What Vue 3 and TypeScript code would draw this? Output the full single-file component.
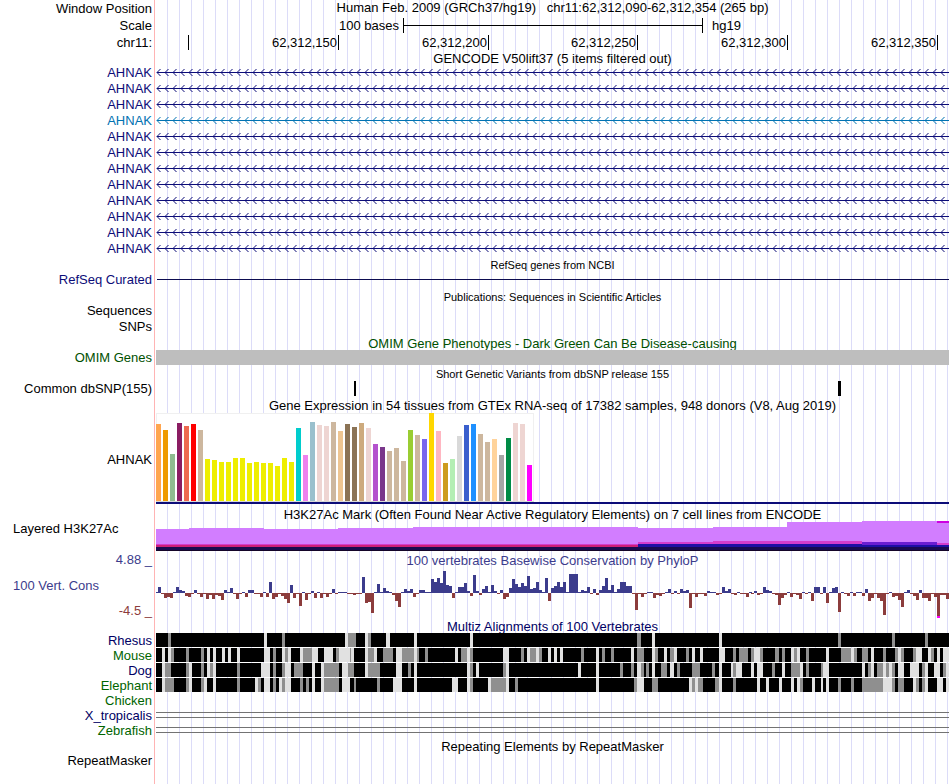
<script setup lang="ts">
type Span = [start: number, width: number, shade: 'g' | 'l']

interface SpanBlock {
  offset: number
  spans: Span[]
}

interface Layer {
  color: string
  points: [x: number, y: number, width: number, height: number][]
}

const ORIGIN = 156

const genes = Array.from({ length: 12 }, (_, i) => ({ id: i, name: 'AHNAK', alt: i === 3 }))

const arrowHeads = Array.from({ length: 99 }, (_, i) => `M${4.5 + i * 8} 5l-3.5 3.5l3.5 3.5`).join('')

const ticks = ['', '62,312,150', '62,312,200', '62,312,250', '62,312,300', '62,312,350']

const tan = '#cdb79e'
const yellow = '#eeee00'
const rose = '#eed5d2'
const tissues: [height: number, color: string][] = [
  [77, '#ffa54f'], [71, '#ee9a00'], [47, '#8fbc8f'], [78, '#8b1c62'], [75, '#ee6a50'], [77, '#ff0000'],
  [71, tan], [42, yellow], [41, yellow], [39, yellow], [39, yellow], [43, yellow], [43, yellow],
  [38, yellow], [39, yellow], [38, yellow], [38, yellow], [35, yellow], [43, yellow], [39, yellow],
  [73, '#00cdcd'], [46, '#ee82ee'], [79, '#9ac0cd'], [76, rose], [75, rose], [79, tan],
  [70, '#eec591'], [77, '#8b7355'], [74, '#8b7355'], [78, '#cdaa7d'], [73, rose], [57, '#b452cd'],
  [54, '#7a378b'], [50, tan], [53, tan], [40, tan], [71, '#9acd32'], [66, tan],
  [62, '#7a67ee'], [88, '#ffd700'], [70, '#ffb6c1'], [38, '#cd9b1d'], [42, '#b4eeb4'], [65, '#d9d9d9'],
  [76, '#3a5fcd'], [77, '#1e90ff'], [67, tan], [59, tan], [62, '#ffd39b'], [46, '#a6a6a6'],
  [63, '#008b45'], [78, rose], [77, rose], [36, '#ff00ff'],
]

const layers: Layer[] = [
  {
    color: '#d27dff',
    points: [
      [0, 8, 33, 22], [33, 7, 75, 23], [108, 8, 74, 22], [182, 7, 75, 23], [257, 6, 225, 24],
      [482, 7, 75, 23], [557, 6, 74, 24], [631, 1, 75, 29], [706, 0, 87, 30],
    ],
  },
  { color: '#d43ccd', points: [[0, 23, 482, 7], [482, 21, 75, 9], [557, 20, 149, 10], [781, 22, 12, 8]] },
  { color: '#cd1e78', points: [[0, 24, 482, 6]] },
  { color: '#6a1ed2', points: [[706, 21, 75, 9]] },
  { color: '#1e0fa5', points: [[482, 23, 224, 7], [706, 24, 87, 6]] },
  { color: '#190a50', points: [[0, 26, 793, 4]] },
  { color: '#140528', points: [[0, 29, 793, 1]] },
  { color: '#cd00e1', points: [[781, 0, 12, 2]] },
]

const conservation: { offset: number; values: number[] }[] = [
  {
    offset: -1,
    values: [
      1, 6, -1, -5, -4, -5, 1, 6, 3, 2, -3, -4, -1, 3, -1, -4, -1, -6, -2, -6, -2, -3, -7, 3, 1, 5, -1, -6, -1, 1,
      -4, 3, 3, -1, -1, -4, 1, -4, 11, -6, -4, -1, -3, -6, -10, 8, -5, -1, -13, 1, -7, -1, 2, -5, 1, -5, -1, -4,
      -1, 4, -1, 1, 1, 1, -1,
    ],
  },
  {
    offset: 194,
    values: [
      -1, -2, -1, -1, 16, -10, -9, -20, 1, 9, 1, 5, 2, 1, -2, -8, -14, 1, 4, 2, 4, -4, -1, 3, 3, 1, 1, 14, 11, 15,
      10, 22, 8, 7, -5, 1, 6, 6, 10, 2, -3, 18, 2, -2, 4, 7, 1, 8, 2, -1, 3, -6, -4, 5, 14, 9, 6, 10, 7, 17, 4, 5,
      11, 3, 1, 15, -8,
    ],
  },
  {
    offset: 395,
    values: [
      5, 7, 11, 6, 11, 1, 19, 19, 19, 1, 3, 2, 6, -1, 4, -2, 3, 7, 15, 3, 8, 1, 4, 11, 11, 7, 7, -1, -17, -1, -4,
      -1, 1, 1, -5, -2, -3, -1, 1, 4, -1, 2, -1, 4, 2, 3, -15, -1, -4, -1, -1, -3, 2, 1, 1, -2, -1, 6, 2, 4, -1,
      -2, 1, -1, -1, -4, 1,
    ],
  },
  {
    offset: 595,
    values: [
      -1, 2, -2, -1, 6, 3, 2, -1, -2, -12, -5, -2, 1, -4, -1, -2, -6, 1, -1, 1, -8, 6, 6, -1, 6, -10, 1, 5, 6, -19,
      1, -1, -3, 1, -3, 1, 1, -3, 4, -8, -5, -1, -5, -8, -22, -1, 1, -4, -3, -7, -14, 1, 3, -1, -3, -7, 3, -5, -5,
      -8, -1, -4, -23, -2, -2, -6,
    ],
  },
]

const conservationBars = conservation.flatMap(({ offset, values }) =>
  values.map((v, i) => ({ x: offset + i * 3, y: v > 0 ? 25 - v : 25, h: Math.abs(v), up: v > 0 })),
)

const species: { name: string; alt: boolean; blocks: SpanBlock[] }[] = [
  {
    name: 'Rhesus',
    alt: false,
    blocks: [
      { offset: 150, spans: [[18, 3, 'g'], [114, 3, 'l'], [132, 3, 'g'], [195, 3, 'l'], [198, 8, 'g']] },
      { offset: 350, spans: [[15, 3, 'l'], [18, 3, 'g'], [36, 4, 'l'], [64, 3, 'l'], [120, 3, 'l']] },
      { offset: 550, spans: [[87, 4, 'g'], [102, 3, 'l'], [169, 3, 'l']] },
      { offset: 750, spans: [[88, 3, 'g'], [142, 3, 'g'], [175, 3, 'g']] },
    ],
  },
  {
    name: 'Mouse',
    alt: true,
    blocks: [
      {
        offset: 150,
        spans: [
          [12, 3, 'l'], [18, 3, 'l'], [21, 3, 'g'], [36, 3, 'g'], [51, 3, 'g'], [57, 3, 'l'], [63, 3, 'l'],
          [72, 3, 'l'], [78, 3, 'l'], [87, 3, 'l'], [114, 6, 'l'], [123, 3, 'g'], [132, 3, 'l'], [135, 3, 'g'],
          [138, 3, 'l'], [150, 3, 'l'], [153, 9, 'g'], [162, 6, 'l'], [174, 9, 'l'], [186, 3, 'g'], [189, 11, 'l'],
        ],
      },
      {
        offset: 350,
        spans: [
          [0, 1, 'g'], [1, 3, 'l'], [15, 3, 'l'], [18, 6, 'g'], [24, 3, 'l'], [33, 10, 'g'], [46, 6, 'l'],
          [52, 12, 'g'], [64, 3, 'l'], [67, 2, 'g'], [75, 3, 'g'], [105, 3, 'l'], [111, 6, 'g'], [117, 3, 'l'],
          [120, 3, 'g'], [153, 6, 'l'], [171, 3, 'g'], [177, 3, 'l'], [180, 6, 'g'], [186, 3, 'l'], [189, 3, 'g'],
          [198, 3, 'l'],
        ],
      },
      {
        offset: 550,
        spans: [
          [4, 3, 'l'], [10, 3, 'l'], [31, 3, 'g'], [46, 3, 'l'], [52, 3, 'g'], [61, 3, 'g'], [81, 3, 'l'],
          [87, 7, 'g'], [102, 3, 'l'], [105, 3, 'g'], [114, 3, 'l'], [120, 4, 'g'], [124, 3, 'l'], [136, 3, 'g'],
          [142, 3, 'l'], [150, 3, 'l'], [169, 6, 'l'], [183, 3, 'g'], [189, 9, 'g'],
        ],
      },
      {
        offset: 750,
        spans: [
          [1, 3, 'g'], [4, 6, 'l'], [10, 3, 'g'], [25, 4, 'g'], [32, 3, 'g'], [41, 3, 'l'], [44, 3, 'g'],
          [47, 3, 'l'], [56, 3, 'g'], [76, 3, 'l'], [91, 10, 'g'], [101, 3, 'l'], [104, 3, 'g'], [112, 6, 'g'],
          [121, 3, 'l'], [133, 3, 'g'], [145, 3, 'g'], [148, 3, 'l'], [151, 3, 'g'], [163, 3, 'g'], [166, 6, 'l'],
          [178, 3, 'l'], [181, 3, 'g'], [187, 3, 'l'], [193, 6, 'l'],
        ],
      },
    ],
  },
  {
    name: 'Dog',
    alt: false,
    blocks: [
      {
        offset: 150,
        spans: [
          [12, 3, 'l'], [15, 6, 'g'], [36, 3, 'g'], [39, 3, 'l'], [51, 3, 'g'], [57, 3, 'l'], [60, 3, 'g'],
          [63, 3, 'l'], [87, 3, 'g'], [111, 9, 'l'], [123, 3, 'g'], [132, 3, 'g'], [135, 6, 'l'], [144, 9, 'g'],
          [162, 3, 'l'], [171, 3, 'l'], [174, 15, 'g'], [192, 6, 'l'], [198, 2, 'g'],
        ],
      },
      {
        offset: 350,
        spans: [
          [0, 4, 'g'], [15, 3, 'l'], [18, 12, 'g'], [46, 6, 'l'], [58, 3, 'g'], [64, 3, 'l'], [117, 3, 'l'],
          [120, 3, 'g'], [126, 3, 'l'], [153, 3, 'g'], [156, 3, 'l'],
        ],
      },
      {
        offset: 550,
        spans: [
          [28, 3, 'l'], [46, 3, 'l'], [70, 3, 'g'], [81, 3, 'g'], [87, 4, 'l'], [91, 3, 'g'], [96, 3, 'g'],
          [102, 3, 'l'], [111, 6, 'g'], [120, 4, 'l'], [127, 3, 'g'], [142, 8, 'g'], [162, 3, 'g'], [169, 3, 'l'],
          [181, 2, 'l'], [183, 3, 'g'], [186, 6, 'l'],
        ],
      },
      {
        offset: 750,
        spans: [
          [1, 3, 'l'], [7, 6, 'l'], [22, 3, 'g'], [32, 3, 'l'], [41, 9, 'g'], [50, 3, 'l'], [56, 3, 'g'],
          [71, 2, 'g'], [73, 6, 'l'], [112, 3, 'l'], [118, 3, 'g'], [121, 3, 'l'], [127, 6, 'g'], [133, 3, 'l'],
          [136, 3, 'g'], [139, 3, 'l'], [142, 3, 'g'], [148, 6, 'l'], [160, 9, 'l'], [172, 3, 'g'], [175, 3, 'l'],
          [184, 6, 'l'], [193, 3, 'g'], [196, 3, 'l'],
        ],
      },
    ],
  },
  {
    name: 'Elephant',
    alt: true,
    blocks: [
      {
        offset: 150,
        spans: [
          [12, 3, 'l'], [15, 9, 'g'], [36, 3, 'g'], [39, 3, 'l'], [51, 3, 'g'], [54, 3, 'l'], [63, 3, 'l'],
          [87, 3, 'g'], [105, 3, 'l'], [108, 3, 'g'], [114, 6, 'l'], [123, 3, 'g'], [129, 3, 'l'], [132, 3, 'g'],
          [135, 6, 'l'], [150, 3, 'g'], [156, 3, 'g'], [162, 3, 'l'], [171, 3, 'l'], [174, 15, 'g'], [192, 8, 'l'],
        ],
      },
      {
        offset: 350,
        spans: [
          [4, 2, 'g'], [27, 3, 'g'], [43, 9, 'l'], [64, 3, 'l'], [102, 6, 'l'], [117, 3, 'l'], [120, 3, 'g'],
          [138, 3, 'l'], [141, 15, 'g'], [156, 3, 'l'], [165, 3, 'g'],
        ],
      },
      {
        offset: 550,
        spans: [
          [46, 3, 'l'], [84, 3, 'g'], [87, 7, 'l'], [102, 6, 'g'], [139, 3, 'l'], [142, 3, 'g'], [145, 3, 'l'],
          [148, 5, 'g'], [165, 4, 'g'], [169, 3, 'l'], [183, 3, 'g'],
        ],
      },
      {
        offset: 750,
        spans: [
          [7, 3, 'l'], [16, 3, 'l'], [29, 3, 'l'], [41, 3, 'l'], [47, 3, 'l'], [50, 3, 'g'], [62, 3, 'l'],
          [71, 2, 'l'], [76, 3, 'l'], [88, 3, 'g'], [101, 3, 'g'], [112, 21, 'g'], [133, 9, 'l'], [142, 3, 'g'],
          [148, 6, 'g'], [163, 3, 'l'], [166, 3, 'g'], [172, 3, 'g'], [175, 3, 'l'], [187, 6, 'l'], [196, 3, 'l'],
        ],
      },
    ],
  },
]

const alignments = species.map((s) => ({
  name: s.name,
  alt: s.alt,
  cells: s.blocks.flatMap((b) =>
    b.spans.map(([start, width, shade]) => ({ x: b.offset - ORIGIN + start, width, shade })),
  ),
}))

const distant = [
  { name: 'Chicken', alt: true, lines: false },
  { name: 'X_tropicalis', alt: false, lines: true },
  { name: 'Zebrafish', alt: true, lines: true },
]
</script>

<template>
  <main class="browser">
    <div class="row header">
      <div class="label">Window Position</div>
      <div class="data title"><span class="position">Human Feb. 2009 (GRCh37/hg19)&nbsp;&nbsp; chr11:62,312,090-62,312,354 (265 bp)</span></div>
    </div>
    <div class="row scale-row">
      <div class="label">Scale</div>
      <div class="data scale">
        <span class="scale-from">100 bases</span>
        <span class="scale-bar"></span>
        <span class="scale-to">hg19</span>
      </div>
    </div>
    <div class="row ruler-row">
      <div class="label">chr11:</div>
      <div class="data ruler">
        <span v-for="(t, i) in ticks" :key="i" class="tick">{{ t }}</span>
      </div>
    </div>

    <div class="row first-title">
      <div class="label"></div>
      <div class="data title">GENCODE V50lift37 (5 items filtered out)</div>
    </div>
    <div v-for="g in genes" :key="g.id" class="row gene" :class="{ alt: g.alt }">
      <div class="label">{{ g.name }}</div>
      <svg class="data plot" viewBox="0 0 793 16" preserveAspectRatio="none">
        <rect x="1" y="8" width="792" height="1" fill="currentColor" shape-rendering="crispEdges" />
        <path :d="arrowHeads" fill="none" stroke="currentColor" />
      </svg>
    </div>

    <div class="row title-row">
      <div class="label"></div>
      <div class="data title small">RefSeq genes from NCBI</div>
    </div>
    <div class="row refseq">
      <div class="label">RefSeq Curated</div>
      <svg class="data plot" viewBox="0 0 793 17" preserveAspectRatio="none" shape-rendering="crispEdges">
        <rect x="1" y="8" width="792" height="1" fill="#0c0c50" />
      </svg>
    </div>

    <div class="row title-row">
      <div class="label"></div>
      <div class="data title small">Publications: Sequences in Scientific Articles</div>
    </div>
    <div class="row publication"><div class="label">Sequences</div></div>
    <div class="row publication"><div class="label">SNPs</div></div>

    <div class="row title-row omim">
      <div class="label"></div>
      <div class="data title">OMIM Gene Phenotypes - Dark Green Can Be Disease-causing</div>
    </div>
    <div class="row title-row omim">
      <div class="label">OMIM Genes</div>
      <div class="data omim-bar"></div>
    </div>

    <div class="row title-row">
      <div class="label"></div>
      <div class="data title small">Short Genetic Variants from dbSNP release 155</div>
    </div>
    <div class="row snp">
      <div class="label">Common dbSNP(155)</div>
      <svg class="data plot" viewBox="0 0 793 17" preserveAspectRatio="none" shape-rendering="crispEdges">
        <rect x="198" y="1" width="2" height="15" />
        <rect x="682" y="1" width="3" height="15" />
      </svg>
    </div>

    <div class="row title-row">
      <div class="label"></div>
      <div class="data title">Gene Expression in 54 tissues from GTEx RNA-seq of 17382 samples, 948 donors (V8, Aug 2019)</div>
    </div>
    <div class="row gtex">
      <div class="label">AHNAK</div>
      <svg class="data plot" viewBox="0 0 793 94" preserveAspectRatio="none" shape-rendering="crispEdges">
        <rect x="0" y="1" width="378" height="89" fill="#f0f0f0" />
        <rect x="1" y="2" width="376" height="87" fill="#fff" />
        <rect x="0" y="89" width="378" height="1" fill="#d8d8d8" />
        <rect
          v-for="([h, color], i) in tissues"
          :key="i"
          :x="i * 7"
          :y="89 - h"
          width="5"
          :height="h"
          :fill="color"
        />
        <rect x="0" y="90" width="793" height="2" fill="#0c0c78" />
      </svg>
    </div>

    <div class="row title-row">
      <div class="label"></div>
      <div class="data title">H3K27Ac Mark (Often Found Near Active Regulatory Elements) on 7 cell lines from ENCODE</div>
    </div>
    <div class="row h3k">
      <div class="label wide">Layered H3K27Ac</div>
      <svg class="data plot" viewBox="0 0 793 30" preserveAspectRatio="none" shape-rendering="crispEdges">
        <g v-for="(layer, i) in layers" :key="i" :fill="layer.color">
          <rect v-for="([x, y, w, h], j) in layer.points" :key="j" :x="x" :y="y" :width="w" :height="h" />
        </g>
      </svg>
    </div>

    <div class="row cons">
      <div class="label stack">
        <span>4.88 _</span>
        <span class="wide">100 Vert. Cons</span>
        <span class="low">-4.5 _</span>
      </div>
      <div class="data">
        <div class="title cons-title">100 vertebrates Basewise Conservation by PhyloP</div>
        <svg class="plot cons-plot" viewBox="0 0 793 50" preserveAspectRatio="none" shape-rendering="crispEdges">
          <rect
            v-for="(b, i) in conservationBars"
            :key="i"
            :x="b.x"
            :y="b.y"
            width="3"
            :height="b.h"
            :fill="b.up ? '#3c3c8c' : '#8c3c3c'"
          />
          <rect x="781" y="48" width="3" height="2" fill="#ff00ff" />
        </svg>
      </div>
    </div>

    <div class="row title-row multiz">
      <div class="label"></div>
      <div class="data title">Multiz Alignments of 100 Vertebrates</div>
    </div>
    <div v-for="s in alignments" :key="s.name" class="row title-row multiz" :class="{ even: s.alt }">
      <div class="label">{{ s.name }}</div>
      <svg class="data plot" viewBox="0 0 793 15" preserveAspectRatio="none" shape-rendering="crispEdges">
        <rect width="793" height="14" fill="#000" />
        <rect
          v-for="(c, i) in s.cells"
          :key="i"
          :x="c.x"
          y="0"
          :width="c.width"
          height="14"
          :fill="c.shade === 'g' ? '#8f8f8f' : '#e1e1e1'"
        />
      </svg>
    </div>
    <div v-for="s in distant" :key="s.name" class="row title-row multiz" :class="{ even: s.alt }">
      <div class="label">{{ s.name }}</div>
      <svg
        v-if="s.lines"
        class="data plot"
        viewBox="0 0 793 15"
        preserveAspectRatio="none"
        shape-rendering="crispEdges"
      >
        <rect y="4" width="793" height="1" fill="#737373" />
        <rect y="9" width="793" height="1" fill="#737373" />
      </svg>
    </div>

    <div class="row title-row">
      <div class="label"></div>
      <div class="data title">Repeating Elements by RepeatMasker</div>
    </div>
    <div class="row title-row"><div class="label">RepeatMasker</div></div>
    <div class="row rest"><div class="label"></div></div>
  </main>
</template>

<style>
body {
  margin: 0;
  background: #fff;
}
</style>

<style scoped>
.browser {
  display: flex;
  flex-direction: column;
  box-sizing: border-box;
  min-height: 100vh;
  padding-right: 1px;
  overflow: hidden;
  color: #000;
  font: 13px/15px "Liberation Sans", Arial, sans-serif;
  white-space: nowrap;
  background: repeating-linear-gradient(to right, transparent 0 11px, #dcdcf8 11px 12px) 156px 0 / calc(100% - 157px) 100% no-repeat;
}

.row {
  display: grid;
  grid-template-columns: 155px minmax(0, 1fr);
  column-gap: 1px;
}

.label {
  display: flex;
  align-items: center;
  justify-content: flex-end;
  box-sizing: border-box;
  min-height: 0;
  padding-right: 2px;
  border-right: 1px solid #ffb4b4;
}

.label.wide {
  justify-content: flex-start;
  padding-left: 13px;
  padding-bottom: 16px;
}

.title {
  display: flex;
  align-items: center;
  justify-content: center;
}

.title-row .title {
  box-sizing: border-box;
  height: 15px;
  padding-top: 2px;
}

.title-row .small {
  padding-top: 4px;
  font-size: 11px;
}

.plot {
  display: block;
  width: 100%;
  height: 100%;
  min-height: 0;
}

.header { height: 16px; }
.scale-row { height: 18px; }
.ruler-row { height: 17px; }
.first-title { height: 13px; }
.gene, .publication { height: 16px; }
.title-row { height: 15px; }
.refseq, .snp { height: 17px; }
.gtex { height: 94px; }
.h3k { height: 30px; }
.cons { height: 67px; }
.rest { flex: 1; }

.header .title,
.publication .label {
  padding-bottom: 2px;
}

.scale {
  display: grid;
  grid-template-columns: 247fr 300fr 246fr;
  align-items: center;
}

.scale-from {
  padding-right: 4px;
  text-align: right;
}

.scale-bar {
  height: 15px;
  box-sizing: border-box;
  border: solid #000;
  border-width: 0 1px;
  background: linear-gradient(#000, #000) 0 7px / 100% 1px no-repeat;
}

.scale-to {
  padding-left: 9px;
}

.ruler {
  display: grid;
  grid-template-columns: 33fr 150fr 150fr 149fr 150fr 150fr 11fr;
  align-items: center;
}

.tick {
  box-sizing: border-box;
  height: 15px;
  min-width: 0;
  padding-right: 1px;
  border-right: 1px solid #000;
  text-align: right;
}

.gene, .refseq {
  color: #0c0c78;
}

.gene.alt {
  color: #0072b2;
}

.omim {
  color: #005000;
}

.omim-bar {
  background: #bebebe;
}

.cons {
  color: #3c3c8c;
}

.label.stack {
  flex-direction: column;
  align-items: flex-end;
  justify-content: space-between;
  padding-top: 1px;
}

.stack .wide {
  align-self: flex-start;
  padding-left: 13px;
}

.low {
  color: #8c3c3c;
}

.cons-title {
  height: 17px;
  padding-top: 1px;
  box-sizing: border-box;
}

.cons-plot {
  height: 50px;
}

.multiz {
  color: #000064;
}

.multiz.even {
  color: #006400;
}
</style>
